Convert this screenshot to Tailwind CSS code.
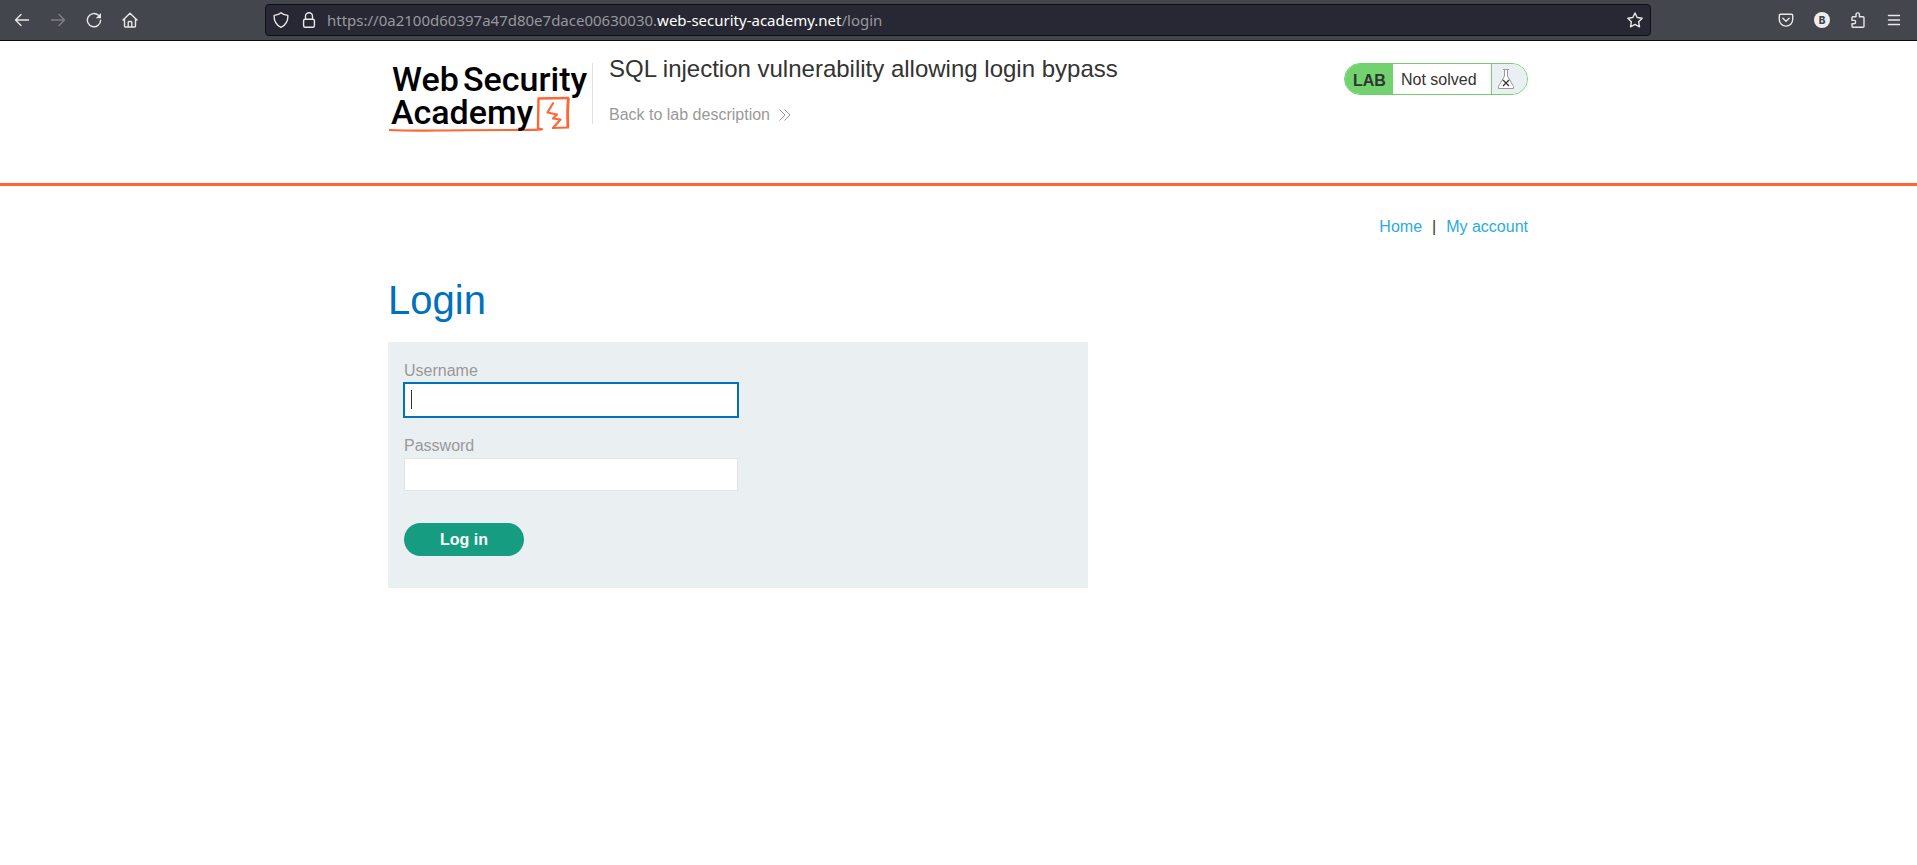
<!DOCTYPE html>
<html lang="en">
<head>
<meta charset="utf-8">
<title>SQL injection vulnerability allowing login bypass</title>
<script src="https://cdn.jsdelivr.net/npm/@tailwindcss/browser@4"></script>
</head>
<body class="min-h-screen bg-white font-['Liberation_Sans',Arial,sans-serif] text-base text-[#333332]">

<!-- Browser toolbar -->
<div class="flex h-[41px] items-center justify-between border-b border-[#0c0c0d] bg-[#44464d] text-[#e8e8e8]">
  <div class="flex flex-1 items-center gap-5 pl-3.5">
    <button type="button" aria-label="Back"><svg class="size-4" viewBox="0 0 16 16" fill="none" stroke="currentColor" stroke-width="1.4" stroke-linecap="round" stroke-linejoin="round"><path d="M14.5 8H1.5M7 2.5L1.5 8L7 13.5"/></svg></button>
    <button type="button" aria-label="Forward" class="text-[#7f8085]"><svg class="size-4" viewBox="0 0 16 16" fill="none" stroke="currentColor" stroke-width="1.4" stroke-linecap="round" stroke-linejoin="round"><path d="M1.5 8H14.5M9 2.5L14.5 8L9 13.5"/></svg></button>
    <button type="button" aria-label="Reload"><svg class="size-4" viewBox="0 0 16 16" fill="none" stroke="currentColor" stroke-width="1.4" stroke-linecap="round"><path d="M12.5 3.3A6.6 6.6 0 1 0 14.6 8.2"/><path d="M15 1V6.2H9.8Z" fill="currentColor" stroke="none"/></svg></button>
    <button type="button" aria-label="Home"><svg class="size-4" viewBox="0 0 16 16" fill="none" stroke="currentColor" stroke-width="1.4" stroke-linecap="round" stroke-linejoin="round"><path d="M1 8L8 1.2L15 8M2.5 6.8V14Q2.5 15 3.5 15H12.5Q13.5 15 13.5 14V6.8M6.2 15V10.5Q6.2 9.5 7 9.5H9Q9.8 9.5 9.8 10.5V15"/></svg></button>
  </div>
  <div class="flex h-8 w-[1386px] max-w-[73%] items-center rounded border border-[#0f1014] bg-[#272834] px-[7px]">
    <button type="button" aria-label="Tracking protection"><svg class="size-4" viewBox="0 0 16 16" fill="none" stroke="currentColor" stroke-width="1.4" stroke-linejoin="round"><path d="M8 .8C9.5 2.3 12 3 14.8 3.4C15.3 8.5 12.5 13.5 8 15.3C3.5 13.5 .7 8.5 1.2 3.4C4 3 6.5 2.3 8 .8Z"/></svg></button>
    <button type="button" aria-label="Site security" class="ml-3"><svg class="size-4" viewBox="0 0 16 16" fill="none" stroke="currentColor" stroke-width="1.4" stroke-linejoin="round"><rect x="2.6" y="7.3" width="10.8" height="8" rx="1.5"/><path d="M4.5 7.3V4.2A3.5 3.5 0 0 1 11.5 4.2V7.3"/></svg></button>
    <div class="ml-2.5 flex-1 font-['Noto_Sans',sans-serif] text-[15px] leading-5 text-[#97989e]">https://0a2100d60397a47d80e7dace00630030.<span class="text-white">web-security-academy.net</span>/login</div>
    <button type="button" aria-label="Bookmark"><svg class="size-4" viewBox="0 0 16 16" fill="none" stroke="currentColor" stroke-width="1.4" stroke-linejoin="round"><path d="M8 1L10.2 5.5L15.2 6.2L11.6 9.7L12.5 14.8L8 12.4L3.5 14.8L4.4 9.7L.8 6.2L5.8 5.5Z"/></svg></button>
  </div>
  <div class="flex flex-1 items-center justify-end gap-5 pr-[15px]">
    <button type="button" aria-label="Pocket"><svg class="size-4" viewBox="0 0 16 16" fill="none" stroke="currentColor" stroke-width="1.4" stroke-linecap="round" stroke-linejoin="round"><path d="M2.5 2.2H13.5Q14.7 2.2 14.7 3.4V7.5A6.7 6.6 0 0 1 1.3 7.5V3.4Q1.3 2.2 2.5 2.2ZM4.8 6.3L8 9.3L11.2 6.3"/></svg></button>
    <button type="button" aria-label="Extension" class="flex size-4 items-center justify-center rounded-full bg-[#ededed] font-['Inter',sans-serif] text-[10px] leading-4 font-extrabold text-[#44464d]">B</button>
    <button type="button" aria-label="Extensions"><svg class="size-4" viewBox="0 0 16 16" fill="none" stroke="currentColor" stroke-width="1.4" stroke-linejoin="round"><path d="M2 7.6V5.8Q2 4.8 3 4.8H6V2.6A1.7 1.7 0 0 1 9.4 2.6V4.8H13Q14 4.8 14 5.8V14.2Q14 15.2 13 15.2H3Q2 15.2 2 14.2V11.8H4A1.7 1.7 0 0 0 4 8.4H2Z"/></svg></button>
    <button type="button" aria-label="Menu"><svg class="size-4" viewBox="0 0 16 16" fill="none" stroke="currentColor" stroke-width="1.4" stroke-linecap="round"><path d="M2.5 3.5H13.5M2.5 8H13.5M2.5 12.5H13.5"/></svg></button>
  </div>
</div>

<!-- Lab header -->
<header class="border-b-3 border-[#ff6633] pb-[50px]">
  <div class="mx-auto flex max-w-[1141px] items-start pt-3 pr-px">
    <a href="#" aria-label="Web Security Academy" class="mt-1.5 shrink-0">
      <svg class="h-[74px] w-[203px]" viewBox="0 0 203 74">
        <g fill="none" stroke="#ff6633" stroke-linejoin="round">
          <path d="M1 71Q22 72 48 71.5T120 71T150 69.5" stroke-width="2.2"/>
          <path d="M150 70L150.500 39.5M149.500 39.500L181 39" stroke-width="2.4"/>
          <path d="M180.500 39Q179 52 180 68" stroke-width="2.8"/>
          <path d="M164 69L181 68.5" stroke-width="2.2"/>
          <path d="M165.500 43.500L159.500 53.500L169 55.500L165 59.500L172.500 60.500L165 69" stroke-width="2.200"/>
        </g>
        <g font-family="Roboto, sans-serif" font-size="34" font-weight="500" fill="#000">
          <text x="4" y="32">Web</text>
          <text x="75" y="32">Security</text>
          <text x="3" y="65">Academy</text>
        </g>
      </svg>
    </a>
    <div class="mt-2.5 ml-px h-[61px] w-px bg-[#e0e0e0]"></div>
    <div class="ml-4 flex-1">
      <h2 class="text-2xl leading-8">SQL injection vulnerability allowing login bypass</h2>
      <a href="#" class="mt-[18px] flex items-center leading-6 text-[#999999]">Back to lab description
        <svg class="ml-2 h-3 w-3.5" viewBox="0 0 14 12" fill="none" stroke="currentColor" stroke-width="1"><path d="M1.5 .5L7 6L1.5 11.5M6.5 .5L12 6L6.5 11.5"/></svg>
      </a>
    </div>
    <div class="mt-2.5 flex h-8 w-46 shrink-0 overflow-hidden rounded-full border border-[#70d070]">
      <span class="w-12 bg-[#72d26f] pl-2 leading-[34px] font-bold">LAB</span>
      <p class="flex-1 pl-2 leading-8">Not solved</p>
      <span class="flex w-9 items-center border-l border-[#70d070] bg-[#eaeff2] pl-1.5">
        <svg class="h-5 w-4" viewBox="0 0 16 20"><path d="M5 .5H11M6.5 .5V7L.5 17.5V19.5H15.5V17.5L9.5 7V.5" fill="#fff" stroke="#999" stroke-width="1"/><path d="M5 11L11 17M11 11L5 17" stroke="#333332" stroke-width="1.3"/></svg>
      </span>
    </div>
  </div>
</header>

<main class="mx-auto max-w-[1141px] pr-px">
  <nav class="flex justify-end gap-2.5 pt-[29px] leading-6">
    <a href="#" class="text-[#29abe2]">Home</a>
    <span>|</span>
    <a href="#" class="text-[#29abe2]">My account</a>
  </nav>
  <h1 class="mt-[37px] text-[40px] leading-12 text-[#0071bc]">Login</h1>
  <form class="mt-[18px] max-w-[700px] bg-[#eaeff2] px-4 pt-[17px] pb-8 leading-6 text-[#999999]">
    <label for="username" class="block">Username</label>
    <div class="relative w-[334px]">
      <input id="username" type="text" class="block h-[34px] w-full bg-white px-2 text-[#333332] caret-transparent outline-2 -outline-offset-1 outline-[#0071bc]">
      <span class="absolute top-[7px] left-[7px] h-[19px] w-px bg-[#333332]"></span>
    </div>
    <label for="password" class="mt-[17px] block">Password</label>
    <input id="password" type="password" class="block h-[33px] w-[334px] border border-[#e3e3e3] bg-white px-2 text-[#333332] outline-none">
    <button type="button" class="mt-8 block h-[33px] w-[120px] rounded-full bg-[#169c80] font-bold text-white">Log in</button>
  </form>
</main>
</body>
</html>
